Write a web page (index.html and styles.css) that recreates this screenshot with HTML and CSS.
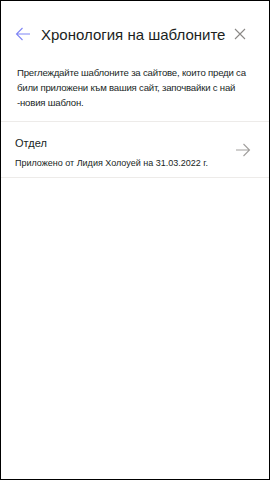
FILE: index.html
```html
<!DOCTYPE html>
<html lang="bg">
<head>
  <meta charset="UTF-8">
  <meta name="viewport" content="width=device-width, initial-scale=1.0">
  <title>Хронология на шаблоните</title>
  <link rel="stylesheet" href="styles.css">
</head>
<body>
  <div class="panel">
    <div class="header">
      <button class="icon-button back" aria-label="Назад">
        <svg width="16" height="16" viewBox="0 0 16 16"><path d="M15 8H1.5M7.5 2L1.5 8l6 6" fill="none" stroke="currentColor" stroke-width="1.1"/></svg>
      </button>
      <h1 class="title">Хронология на шаблоните</h1>
      <button class="icon-button close" aria-label="Затвори">
        <svg width="12" height="12" viewBox="0 0 12 12"><path d="M1 1l10 10M11 1L1 11" fill="none" stroke="currentColor" stroke-width="1.1"/></svg>
      </button>
    </div>

    <p class="intro">Преглеждайте шаблоните за сайтове, които преди са били приложени към вашия сайт, започвайки с най -новия шаблон.</p>

    <ul class="history">
      <li class="history-item">
        <div class="item-text">
          <div class="item-name">Отдел</div>
          <div class="item-meta">Приложено от Лидия Холоуей на 31.03.2022 г.</div>
        </div>
        <svg class="item-arrow" width="16" height="16" viewBox="0 0 16 16"><path d="M1 8h13.5M8.5 2l6 6-6 6" fill="none" stroke="currentColor" stroke-width="1.1"/></svg>
      </li>
    </ul>
  </div>
</body>
</html>
```

FILE: styles.css
```css
* {
  box-sizing: border-box;
}

body {
  margin: 0;
  font-family: "Liberation Sans", Arial, sans-serif;
  color: #201f1e;
  background: #fff;
}

.panel {
  width: 270px;
  height: 480px;
  border: 1px solid #000;
  background: #fff;
}

.header {
  display: flex;
  align-items: center;
  height: 52px;
  padding: 14px 0 0 14px;
}

.icon-button {
  display: flex;
  align-items: center;
  justify-content: center;
  border: none;
  background: none;
  padding: 0;
  cursor: pointer;
}

.back {
  width: 16px;
  height: 16px;
  color: #7f85f5;
  margin-right: 10px;
}

.title {
  margin: 0;
  font-size: 15px;
  font-weight: normal;
  color: #201f1e;
  white-space: nowrap;
}

.close {
  width: 12px;
  height: 12px;
  color: #8a8886;
  margin-left: auto;
  margin-right: 23px;
}

.intro {
  margin: 12px 0 0;
  padding: 0 12px 0 16px;
  font-size: 9.6px;
  letter-spacing: -0.2px;
  line-height: 15px;
  color: #201f1e;
}

.history {
  list-style: none;
  margin: 11px 0 0;
  padding: 0;
  border-top: 1px solid #edebe9;
}

.history-item {
  display: flex;
  align-items: flex-start;
  height: 56px;
  padding: 14px 18px 0 14px;
  border-bottom: 1px solid #edebe9;
}

.item-text {
  flex: 1;
}

.item-name {
  font-size: 11px;
  line-height: 14px;
  margin-bottom: 6px;
}

.item-meta {
  font-size: 9px;
  line-height: 14px;
}

.item-arrow {
  align-self: center;
  margin-top: -14px;
  color: #a19f9d;
}
```
